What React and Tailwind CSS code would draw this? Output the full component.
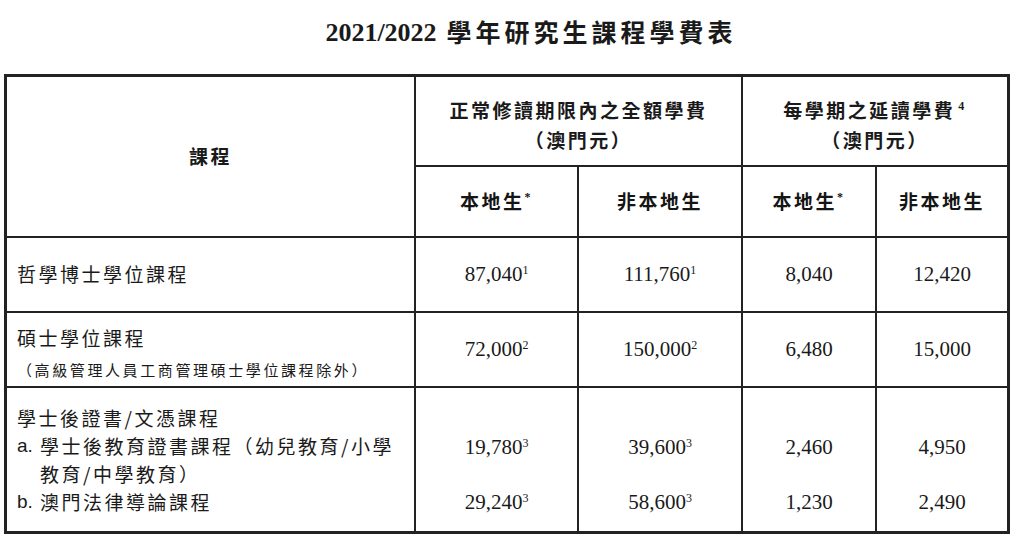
import React from "react";

const cjk = "font-['Noto_Sans_CJK_TC','Noto_Sans_CJK_SC',sans-serif]";
const serif = "font-['Liberation_Serif','Noto_Sans_CJK_TC',serif]";

function Num({ v, s }) {
  return (
    <span className={`${serif} text-[21px] text-[#1a1a1a]`}>
      {v}
      {s && <sup className="text-[12px] top-[-0.6em]">{s}</sup>}
    </span>
  );
}

function NumCell({ v, s }) {
  return (
    <div className="bg-white flex items-center justify-center">
      <Num v={v} s={s} />
    </div>
  );
}

function NumCell2({ a, b, sa, sb }) {
  return (
    <div className="bg-white flex flex-col items-center">
      <div className="mt-[45px] h-[28px] leading-[28px]">
        <Num v={a} s={sa} />
      </div>
      <div className="mt-[27px] h-[28px] leading-[28px]">
        <Num v={b} s={sb} />
      </div>
    </div>
  );
}

function SubHead({ t, star }) {
  return (
    <div className="bg-white flex items-center justify-center">
      <span className={`${cjk} text-[19px] font-semibold tracking-[2.5px] text-[#151515]`}>
        {t}
        {star && <sup className={`${serif} text-[12px] font-bold top-[-0.7em]`}>*</sup>}
      </span>
    </div>
  );
}

export default function App() {
  return (
    <div className="w-[1014px] h-[537px] bg-white text-[#1a1a1a]">
      <div className="h-[74px] flex items-center justify-center pb-[10px] pl-[48px]">
        <span className={`${serif} text-[26px] font-bold`}>2021/2022</span>
        <span className={`${cjk} text-[25px] font-bold tracking-[4px] ml-[10px]`}>學年研究生課程學費表</span>
      </div>
      <div className="pl-[4px]">
        <div className="grid grid-cols-[407px_161px_162px_132px_130px] grid-rows-[88px_69px_73px_73px_143px] gap-[2px] bg-[#222] border-[3px] border-[#222] w-[1006px]">
          <div className="row-span-2 bg-white flex items-center justify-center">
            <span className={`${cjk} text-[19px] font-semibold tracking-[2.5px]`}>課程</span>
          </div>
          <div className="col-span-2 bg-white flex flex-col items-center pt-[18px]">
            <div className={`${cjk} text-[19px] font-semibold tracking-[2.5px] leading-[30px]`}>正常修讀期限內之全額學費</div>
            <div className={`${cjk} text-[19px] font-semibold tracking-[2.5px] leading-[30px]`}>（澳門元）</div>
          </div>
          <div className="col-span-2 bg-white flex flex-col items-center pt-[18px]">
            <div className={`${cjk} text-[19px] font-semibold tracking-[2.5px] leading-[30px]`}>
              每學期之延讀學費<sup className={`${serif} text-[12px] font-bold top-[-0.7em] ml-[3px]`}>4</sup>
            </div>
            <div className={`${cjk} text-[19px] font-semibold tracking-[2.5px] leading-[30px]`}>（澳門元）</div>
          </div>

          <SubHead t="本地生" star />
          <SubHead t="非本地生" />
          <SubHead t="本地生" star />
          <SubHead t="非本地生" />

          <div className="bg-white flex items-center pl-[10px]">
            <span className={`${cjk} text-[19px] tracking-[2.5px]`}>哲學博士學位課程</span>
          </div>
          <NumCell v="87,040" s="1" />
          <NumCell v="111,760" s="1" />
          <NumCell v="8,040" />
          <NumCell v="12,420" />

          <div className="bg-white flex flex-col pl-[10px] pt-[11px]">
            <div className={`${cjk} text-[19px] tracking-[2.5px] leading-[28px]`}>碩士學位課程</div>
            <div className={`${cjk} text-[15px] tracking-[2.6px] leading-[24px] mt-[6px]`}>（高級管理人員工商管理碩士學位課程除外）</div>
          </div>
          <NumCell v="72,000" s="2" />
          <NumCell v="150,000" s="2" />
          <NumCell v="6,480" />
          <NumCell v="15,000" />

          <div className={`bg-white flex flex-col pl-[10px] pt-[16px] ${cjk} text-[19px] tracking-[2.5px] leading-[28px]`}>
            <div>學士後證書/文憑課程</div>
            <div className="flex">
              <span className="w-[23px] shrink-0 font-['Liberation_Sans',sans-serif] tracking-normal">a.</span>
              <span>學士後教育證書課程（幼兒教育/小學</span>
            </div>
            <div className="pl-[23px]">教育/中學教育）</div>
            <div className="flex">
              <span className="w-[23px] shrink-0 font-['Liberation_Sans',sans-serif] tracking-normal">b.</span>
              <span>澳門法律導論課程</span>
            </div>
          </div>
          <NumCell2 a="19,780" sa="3" b="29,240" sb="3" />
          <NumCell2 a="39,600" sa="3" b="58,600" sb="3" />
          <NumCell2 a="2,460" b="1,230" />
          <NumCell2 a="4,950" b="2,490" />
        </div>
      </div>
    </div>
  );
}
